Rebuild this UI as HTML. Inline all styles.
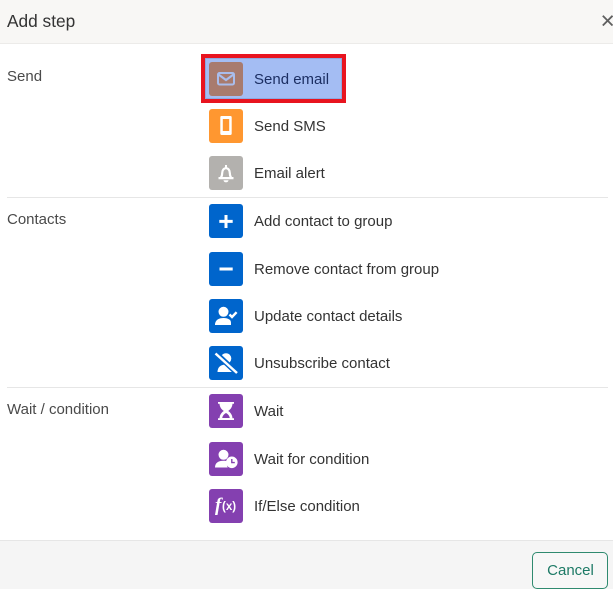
<!DOCTYPE html>
<html><head><meta charset="utf-8">
<style>
html,body{margin:0;padding:0;background:#fff}
body{width:613px;height:589px;position:relative;overflow:hidden;font-family:"Liberation Sans",sans-serif;color:#333}
.a{position:absolute}
.head{left:0;top:0;width:613px;height:43px;background:#f8f7f5;border-bottom:1px solid #ecebe9}
.foot{left:0;top:540px;width:613px;height:49px;background:#f5f5f5;border-top:1px solid #e6e6e6;box-sizing:border-box}
.title{left:7px;top:11px;font-size:17.3px;line-height:20px;color:#333}
.lab{left:7px;font-size:15px;line-height:18px;color:#4a4a4a}
.hr{left:7px;width:601px;height:1px;background:#e6e6e6}
.ic{left:209px;width:34px;height:34px;border-radius:3px}
.ic svg{display:block;width:34px;height:34px}
.t{left:254px;font-size:15px;line-height:18px;color:#333;white-space:nowrap}
.o{background:#ff9730}.g{background:#b3b1ae}.b{background:#0065cc}.p{background:#8440b0}
</style></head><body>
<div class="a head"></div>
<div class="a title">Add step</div>
<svg class="a" style="left:602px;top:15px" width="11" height="11" viewBox="0 0 11 11"><path d="M.8.8L10.500 10.500M10.500.8L.8 10.500" stroke="#5f5f5f" stroke-width="1.800" fill="none"/></svg>

<div class="a lab" style="top:68px">Send</div>
<div class="a lab" style="top:211px">Contacts</div>
<div class="a lab" style="top:401px">Wait / condition</div>

<div class="a hr" style="top:197px"></div>
<div class="a hr" style="top:387px"></div>

<div class="a" style="left:201px;top:54px;width:145px;height:49px;box-sizing:border-box;background:#a4bdf3;border:4px solid #e8141f;box-shadow:inset 0 0 0 1px #8ea8e0"></div>

<div class="a ic" style="top:62px;background:#a87b6e"><svg viewBox="0 0 34 34"><rect x="9" y="11" width="16" height="11.500" rx="1.500" fill="none" stroke="#a9bdec" stroke-width="2"/><path d="M9.500 12.500l7.500 5.500 7.500-5.500" fill="none" stroke="#a9bdec" stroke-width="2.200"/></svg></div>
<div class="a t" style="top:71px;color:#1c2f63">Send email</div>

<div class="a ic o" style="top:109px"><svg viewBox="0 0 34 34"><path fill="#fff" fill-rule="evenodd" d="M12.500 7h9a1.200 1.200 0 0 1 1.200 1.200v16.600a1.200 1.200 0 0 1-1.200 1.200h-9a1.200 1.200 0 0 1-1.200-1.200V8.200A1.200 1.200 0 0 1 12.500 7zm1.300 3v12h6.400V10z"/></svg></div>
<div class="a t" style="top:118px">Send SMS</div>

<div class="a ic g" style="top:156px"><svg viewBox="0 0 34 34"><path fill="none" stroke="#fff" stroke-width="2.200" d="M12 21.500c.8-1.200 1.200-2.500 1.200-4.500 0-2.800 1.600-4.800 3.800-4.800s3.800 2 3.800 4.800c0 2 .4 3.300 1.200 4.500"/><path fill="#fff" d="M9.500 21h15v2.300h-15zM14.500 24.300h5a2.500 2 0 0 1-5 0zM16 9h2v3h-2z"/></svg></div>
<div class="a t" style="top:165px">Email alert</div>

<div class="a ic b" style="top:204px"><svg viewBox="0 0 34 34"><path fill="#fff" d="M15.500 11h3v4.900h5.200v3h-5.200V24h-3v-5.100h-5.200v-3h5.200z"/></svg></div>
<div class="a t" style="top:213px">Add contact to group</div>

<div class="a ic b" style="top:252px"><svg viewBox="0 0 34 34"><path fill="#fff" d="M10.500 15.500h13.200v3H10.500z"/></svg></div>
<div class="a t" style="top:261px">Remove contact from group</div>

<div class="a ic b" style="top:299px"><svg viewBox="0 0 34 34"><circle cx="14.500" cy="12.800" r="5" fill="#fff"/><path fill="#fff" d="M6 26c0-.8 0-1.500.3-2.300C7.300 20.500 10.500 19 14.500 19c2.500 0 4.600.6 6.200 1.700 1 .8 1.300 2 1.300 3.300v2z"/><path fill="none" stroke="#fff" stroke-width="2.400" d="M20.500 15.500l2.500 2.500 4.600-4.800"/></svg></div>
<div class="a t" style="top:308px">Update contact details</div>

<div class="a ic b" style="top:346px"><svg viewBox="0 0 34 34"><circle cx="17" cy="12.500" r="5.300" fill="#fff"/><path fill="#fff" d="M8.500 26c0-5 3.500-7.500 8.500-7.500s8.500 2.500 8.500 7.500z"/><path stroke="#0065cc" stroke-width="5.500" d="M5 5.500L29 28"/><path stroke="#fff" stroke-width="2.500" d="M6.500 7.500L28 27"/></svg></div>
<div class="a t" style="top:355px">Unsubscribe contact</div>

<div class="a ic p" style="top:394px"><svg viewBox="0 0 34 34"><path fill="#fff" d="M9 8h16v1.800h-1.500c-.2 3-1.700 5.500-4.300 7.200 2.600 1.700 4.100 4.200 4.300 7.200H25V26H9v-1.800h1.500c.2-3 1.700-5.500 4.300-7.200-2.600-1.700-4.100-4.200-4.300-7.200H9zM13.200 24h7.600c-.4-2.300-1.800-3.900-3.800-5-2 1.100-3.400 2.700-3.800 5z"/></svg></div>
<div class="a t" style="top:403px">Wait</div>

<div class="a ic p" style="top:442px"><svg viewBox="0 0 34 34"><circle cx="14.500" cy="12.800" r="5" fill="#fff"/><path fill="#fff" d="M6 25.500c0-4.800 3.500-6.800 8.500-6.800 1.800 0 3.300.3 4.600.9-1.300 1.700-1.500 4.300-.3 5.900z"/><circle cx="22.800" cy="20.300" r="5.800" fill="#fff"/><path fill="none" stroke="#8440b0" stroke-width="1.400" d="M22.800 17v3.600h3"/></svg></div>
<div class="a t" style="top:451px">Wait for condition</div>

<div class="a ic p" style="top:489px;overflow:hidden">
<div class="a" style="left:6px;top:0;color:#fff;font:italic bold 19px/34px 'Liberation Serif',serif">f</div>
<div class="a" style="left:13px;top:1px;color:#fff;font:bold 11.500px/34px 'Liberation Sans',sans-serif;white-space:nowrap">(x)</div>
</div>
<div class="a t" style="top:498px">If/Else condition</div>

<div class="a foot"></div>
<div class="a" style="left:532px;top:552px;width:76px;height:37px;box-sizing:border-box;border:1.500px solid #2f8a6f;border-radius:5px;background:#f7f7f7;color:#1d7a66;font-size:15px;line-height:36px;text-align:center;padding-left:1px">Cancel</div>
</body></html>
